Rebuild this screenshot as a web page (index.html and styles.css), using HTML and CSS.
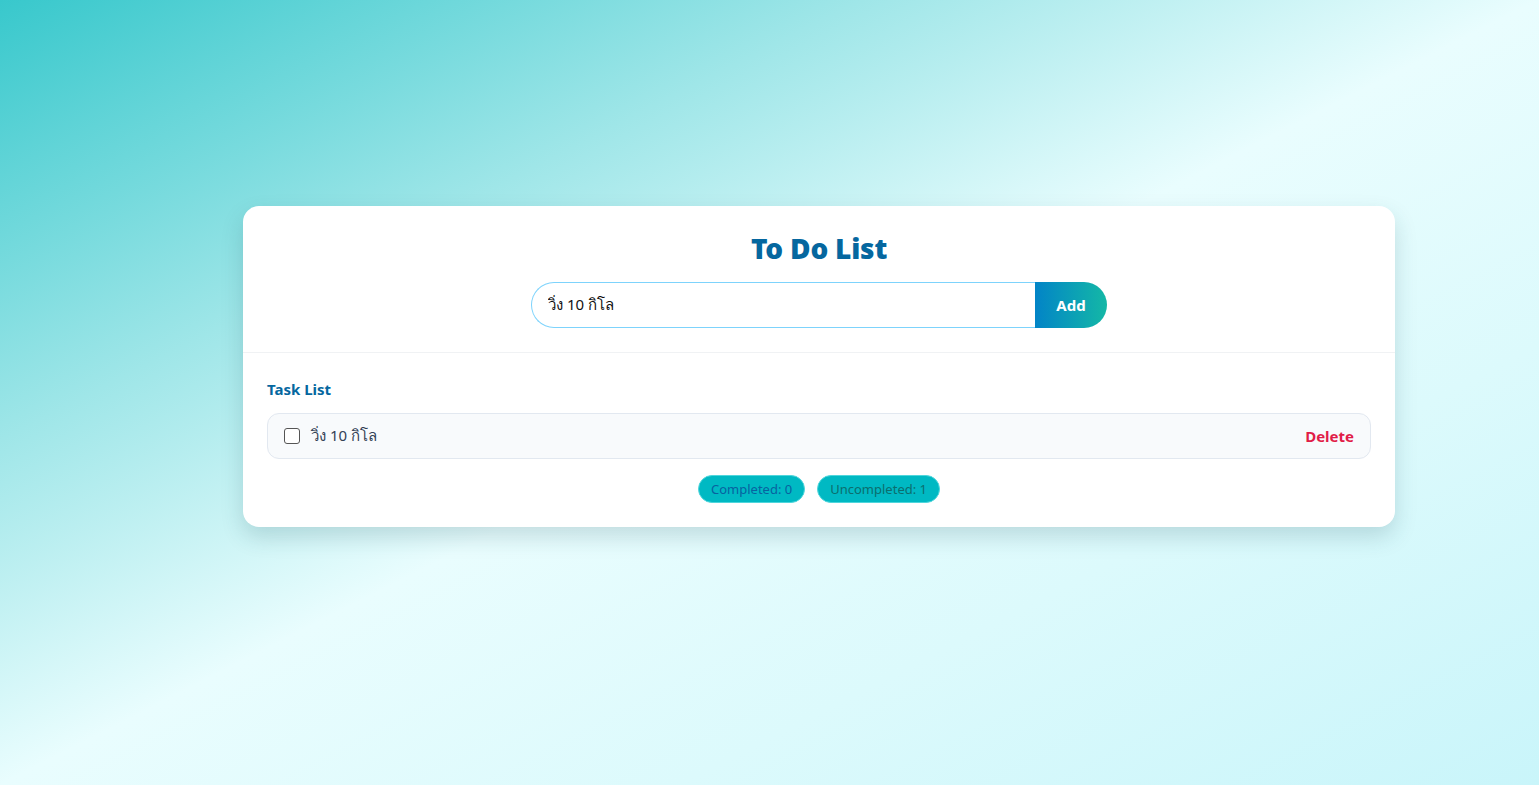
FILE: index.html
```html
<!DOCTYPE html>
<html lang="th">
<head>
<meta charset="utf-8">
<title>To Do List</title>
<link rel="stylesheet" href="styles.css">
</head>
<body>
<main class="page">
  <section class="card">
    <header class="card-head">
      <h1 class="title">To Do List</h1>
      <form class="add-form">
        <input class="add-input" type="text" value="วิ่ง 10 กิโล">
        <button class="add-btn" type="button">Add</button>
      </form>
    </header>
    <div class="card-body">
      <h2 class="list-title">Task List</h2>
      <ul class="tasks">
        <li class="task">
          <label class="task-label">
            <span class="check"></span>
            <span class="task-text">วิ่ง 10 กิโล</span>
          </label>
          <button class="delete" type="button">Delete</button>
        </li>
      </ul>
      <div class="stats">
        <span class="badge badge-done">Completed: 0</span>
        <span class="badge badge-todo">Uncompleted: 1</span>
      </div>
    </div>
  </section>
</main>
</body>
</html>
```

FILE: styles.css
```css
* { box-sizing: border-box; }
html, body { margin: 0; height: 100%; }
body {
  font-family: "Noto Sans", "Inter", sans-serif;
  background: linear-gradient(to bottom right, #38c8cc 0%, #9fe6e8 28%, #e9fdfe 50%, #dcfafc 72%, #c9f5fa 100%);
  min-height: 785px;
}
.page {
  min-height: 785px;
  display: flex;
  justify-content: center;
  align-items: flex-start;
  padding: 206px 0 0 99px;
}
.card {
  width: 1152px;
  background: #fff;
  border-radius: 16px;
  box-shadow: 0 10px 22px rgba(20, 80, 90, 0.18);
}
.card-head {
  padding: 24px 24px 24px;
  border-bottom: 1px solid #f0f2f4;
  display: flex;
  flex-direction: column;
  align-items: center;
}
.title {
  margin: 0 0 16px;
  font-size: 28px;
  line-height: 36px;
  font-weight: 900;
  color: #05679f;
  letter-spacing: -0.2px;
}
.add-form {
  display: flex;
  width: 576px;
  height: 46px;
}
.add-input {
  flex: 1;
  min-width: 0;
  border: 1px solid #7dd3fc;
  border-right: none;
  border-radius: 23px 0 0 23px;
  padding: 0 16px;
  font: inherit;
  font-size: 15px;
  color: #111;
  outline: none;
}
.add-btn {
  width: 72px;
  border: none;
  border-radius: 0 23px 23px 0;
  background: linear-gradient(to right, #0284c7, #14b8a6);
  color: #fff;
  font: inherit;
  font-weight: 700;
  font-size: 15px;
}
.card-body {
  padding: 24px 24px 24px;
}
.list-title {
  margin: 0 0 12px;
  font-size: 15px;
  line-height: 24px;
  font-weight: 700;
  color: #05679f;
}
.tasks {
  list-style: none;
  margin: 0;
  padding: 0;
}
.task {
  height: 46px;
  display: flex;
  align-items: center;
  justify-content: space-between;
  padding: 0 16px;
  background: #f8fafc;
  border: 1px solid #e2e8f0;
  border-radius: 12px;
}
.task-label {
  display: flex;
  align-items: center;
  gap: 11px;
}
.check {
  width: 16px;
  height: 16px;
  border: 1.5px solid #555;
  border-radius: 3px;
  background: #fff;
}
.task-text {
  font-size: 15px;
  color: #334155;
}
.delete {
  border: none;
  background: none;
  padding: 0;
  color: #e11d48;
  font: inherit;
  font-weight: 700;
  font-size: 15px;
}
.stats {
  margin-top: 16px;
  display: flex;
  justify-content: center;
  gap: 12px;
}
.badge {
  height: 28px;
  display: inline-flex;
  align-items: center;
  padding: 0 12px;
  border-radius: 14px;
  background: #00b9c3;
  border: 1px solid #4fd6dc;
  font-size: 13px;
}
.badge-done { color: #0862a0; }
.badge-todo { color: #0c6e6e; }
```
